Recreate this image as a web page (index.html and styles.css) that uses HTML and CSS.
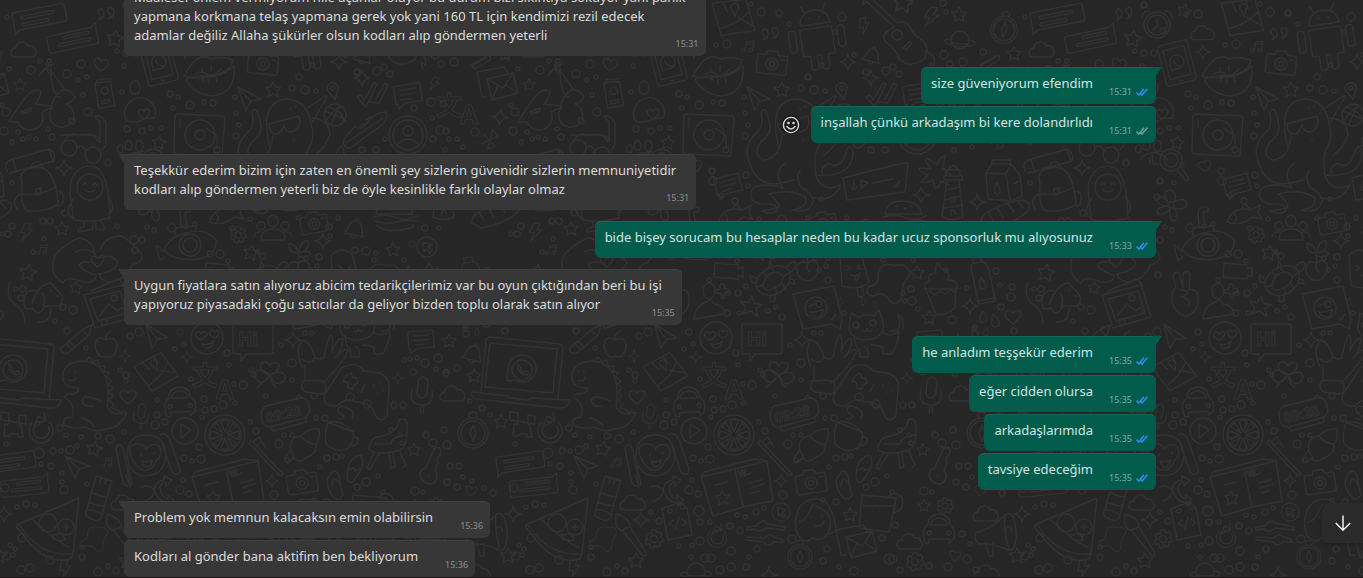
FILE: index.html
```html
<!DOCTYPE html>
<html lang="tr">
<head>
    <meta charset="UTF-8">
    <title>WhatsApp</title>
    <link rel="stylesheet" href="styles.css">
</head>
<body>
    <svg class="wallpaper" aria-hidden="true">
        <defs>
            <pattern id="doodles" width="509" height="600" patternUnits="userSpaceOnUse">
                <g id="tile"></g>
                <use href="#tile" x="-509"/>
                <use href="#tile" x="509"/>
            </pattern>
            <symbol id="ticks" viewBox="0 0 12 8">
                <path d="M0.5 4.5L2.8 7L8 0.8M4.6 5.6L6 7L11.4 0.8" fill="none" stroke="currentColor" stroke-width="1.6"/>
            </symbol>
        </defs>
        <rect width="100%" height="100%" fill="url(#doodles)"/>
    </svg>

    <main class="chat">
        <div class="message in long">
            <p class="text">Maalesef önlem vermiyorum hile açanlar oluyor bu durum bizi sıkıntıya sokuyor yani panik<br>yapmana korkmana telaş yapmana gerek yok yani 160 TL için kendimizi rezil edecek<br>adamlar değiliz Allaha şükürler olsun kodları alıp göndermen yeterli</p>
            <span class="meta">15:31</span>
        </div>

        <div class="message out first">
            <p class="text">size güveniyorum efendim</p>
            <span class="meta">15:31 <svg class="ticks read"><use href="#ticks"/></svg></span>
        </div>
        <div class="row">
            <button class="react" aria-label="İfade bırak">
                <svg viewBox="0 0 18 18" fill="none" stroke="currentColor" stroke-width="1.4">
                    <circle cx="9" cy="9" r="7.6"/>
                    <path d="M5 10.5Q9 15.5 13 10.5" stroke-linecap="round"/>
                    <circle cx="6.5" cy="7" r="0.6" fill="currentColor"/>
                    <circle cx="11.5" cy="7" r="0.6" fill="currentColor"/>
                </svg>
            </button>
            <div class="message out">
                <p class="text">inşallah çünkü arkadaşım bi kere dolandırlıdı</p>
                <span class="meta">15:31 <svg class="ticks"><use href="#ticks"/></svg></span>
            </div>
        </div>

        <div class="message in first long">
            <p class="text">Teşekkür ederim bizim için zaten en önemli şey sizlerin güvenidir sizlerin memnuniyetidir<br>kodları alıp göndermen yeterli biz de öyle kesinlikle farklı olaylar olmaz</p>
            <span class="meta">15:31</span>
        </div>

        <div class="message out first">
            <p class="text">bide bişey sorucam bu hesaplar neden bu kadar ucuz sponsorluk mu alıyosunuz</p>
            <span class="meta">15:33 <svg class="ticks read"><use href="#ticks"/></svg></span>
        </div>

        <div class="message in first long">
            <p class="text">Uygun fiyatlara satın alıyoruz abicim tedarikçilerimiz var bu oyun çıktığından beri bu işi<br>yapıyoruz piyasadaki çoğu satıcılar da geliyor bizden toplu olarak satın alıyor</p>
            <span class="meta">15:35</span>
        </div>

        <div class="message out first">
            <p class="text">he anladım teşşekür ederim</p>
            <span class="meta">15:35 <svg class="ticks read"><use href="#ticks"/></svg></span>
        </div>
        <div class="message out">
            <p class="text">eğer cidden olursa</p>
            <span class="meta">15:35 <svg class="ticks read"><use href="#ticks"/></svg></span>
        </div>
        <div class="message out">
            <p class="text">arkadaşlarımıda</p>
            <span class="meta">15:35 <svg class="ticks read"><use href="#ticks"/></svg></span>
        </div>
        <div class="message out">
            <p class="text">tavsiye edeceğim</p>
            <span class="meta">15:35 <svg class="ticks read"><use href="#ticks"/></svg></span>
        </div>

        <div class="message in first">
            <p class="text">Problem yok memnun kalacaksın emin olabilirsin</p>
            <span class="meta">15:36</span>
        </div>
        <div class="message in">
            <p class="text">Kodları al gönder bana aktifim ben bekliyorum</p>
            <span class="meta">15:36</span>
        </div>
    </main>

    <button class="scroll-down" aria-label="En alta in">
        <svg viewBox="0 0 16 16" fill="none" stroke="currentColor" stroke-width="1.4"><path d="M8 0.5V15M0.8 8L8 15.2L15.2 8"/></svg>
    </button>

    <script src="wallpaper.js"></script>
</body>
</html>
```
FILE: styles.css
```css
* {
    box-sizing: border-box;
}
body {
    margin: 0;
    height: 100vh;
    overflow: hidden;
    background-color: #262626;
    border-bottom: 1px solid #1c1216;
    font-family: "Segoe UI", "Noto Sans", sans-serif;
    font-size: 13px;
    line-height: 19px;
}
.wallpaper {
    position: fixed;
    inset: 0;
    width: 100%;
    height: 100%;
    z-index: -1;
}
#tile {
    fill: none;
    stroke: #323232;
    stroke-width: 1.4px;
    stroke-linecap: round;
    stroke-linejoin: round;
}
#tile text {
    font-weight: bold;
    stroke-width: 1px;
}
.chat {
    display: flex;
    flex-direction: column;
    justify-content: flex-end;
    gap: 2px;
    height: 100%;
    padding: 0 207px 0 124px;
}
.row {
    display: flex;
    align-items: center;
    align-self: flex-end;
    gap: 10px;
}
.message {
    position: relative;
    display: grid;
    grid-template-columns: auto auto;
    flex-shrink: 0;
    padding: 7px 8px 11px 10px;
    border-radius: 6px;
    white-space: nowrap;
}
.text {
    margin: 0;
}
.in {
    align-self: flex-start;
    column-gap: 27px;
    padding-right: 7px;
    background-color: #373737;
    color: #dcdcdc;
    box-shadow: inset 0 1px #404040;
}
.out {
    align-self: flex-end;
    column-gap: 16px;
    background-color: #025c4c;
    color: #d3e5e1;
    box-shadow: inset 0 1px #12695a;
}
.first {
    margin-top: 9px;
}
.first::before {
    content: "";
    position: absolute;
    top: 0;
    width: 10px;
    height: 9px;
}
.in.first {
    border-top-left-radius: 0;
}
.in.first::before {
    left: -6px;
    background-color: #373737;
    clip-path: polygon(0 0, 100% 0, 60% 100%);
}
.out.first {
    border-top-right-radius: 0;
}
.out.first::before {
    right: -6px;
    background-color: #025c4c;
    clip-path: polygon(0 0, 100% 0, 40% 100%);
}
.meta {
    display: flex;
    align-items: center;
    gap: 4px;
    align-self: end;
    margin-bottom: -5px;
    font-size: 9px;
    line-height: 12px;
    color: #8f8f8f;
}
.out .meta {
    color: #7fada4;
}
.long {
    grid-template-columns: auto;
}
.long .text,
.long .meta {
    grid-area: 1 / 1;
}
.long .text {
    padding-right: 13px;
}
.long .meta {
    justify-self: end;
}
.ticks {
    width: 12px;
    height: 8px;
    color: #6da095;
}
.ticks.read {
    color: #2d8be6;
}
button {
    display: flex;
    align-items: center;
    justify-content: center;
    padding: 0;
    border: none;
}
.react {
    width: 20px;
    height: 20px;
    border-radius: 50%;
    background-color: #1d1d1d;
    color: #d8d8d8;
}
.react svg {
    width: 18px;
    height: 18px;
}
.scroll-down {
    position: fixed;
    right: 0;
    bottom: 35px;
    width: 41px;
    height: 40px;
    padding-right: 0;
    border-radius: 6px 0 0 6px;
    background-color: #2a2a2a;
    color: #ffffff;
    box-shadow: 0 1px 4px rgba(0, 0, 0, 0.2);
}
.scroll-down svg {
    width: 16px;
    height: 16px;
}
```
FILE: wallpaper.js
```js
// every shape is drawn round its own centre
const shapes = {
    star: 'M0-8L2.3-3.2L7.6-2.5L3.8 1.2L4.7 6.5L0 4L-4.7 6.5L-3.8 1.2L-7.6-2.5L-2.3-3.2Z',
    sparkle: 'M0-8Q1-1 8 0Q1 1 0 8Q-1 1-8 0Q-1-1 0-8Z',
    heart: 'M0 7C-4 4-8 1-8-3C-8-7-2-8 0-4C2-8 8-7 8-3C8 1 4 4 0 7Z',
    cloud: 'M-9 7C-15 6-14-2-8-2C-8-9 3-10 4-4C11-6 15 4 9 7Z',
    bell: 'M-10 6C-6 3-8-8 0-8C8-8 6 3 10 6ZM-3 7Q0 11 3 7M-2-8Q0-13 2-8',
    bolt: 'M-2-10L5-10L2-3L7-3L-4 10L-1 1L-6 1Z',
    note: 'M-4 5V-6L5-8V3M-4-3L5-5M-4 5a2.5 2 0 1 0-5 1a2.5 2 0 1 0 5-1M5 3a2.5 2 0 1 0-5 1a2.5 2 0 1 0 5-1',
    drop: 'M0-7C5 0 5 6 0 6C-5 6-5 0 0-7Z',
    quote: 'M-2-4a3 3 0 1 0-4 4Q-5 4-8 5Q-1 4-2-4ZM8-4a3 3 0 1 0-4 4Q5 4 2 5Q9 4 8-4Z',
    gear: 'M-2-9H2L3-6L6-7L8-4L6-2L9 0V3L6 3L6 7L3 8L1 6L-1 9L-4 8L-4 5L-8 5L-8 1L-6 0L-8-3L-6-6L-3-5ZM3.5 0a3.5 3.5 0 1 0-7 0a3.5 3.5 0 1 0 7 0',
    camera: 'M-13-8H-7L-5-12H4L6-8H13Q15-8 15-6V9Q15 11 13 11H-13Q-15 11-15 9V-6Q-15-8-13-8ZM6 1a6 6 0 1 0-12 0a6 6 0 1 0 12 0M2.500 1a2.500 2.500 0 1 0-5 0a2.500 2.500 0 1 0 5 0M9-4H12',
    compass: 'M15 0a15 15 0 1 0-30 0a15 15 0 1 0 30 0M12 0a12 12 0 1 0-24 0a12 12 0 1 0 24 0M0-8L3 0L0 8L-3 0ZM-3-15Q-6-20 0-21Q6-20 3-15',
    chat: 'M-24-9H24Q27-9 27-6V7Q27 9 24 9H-21L-27 13L-26 7V-6Q-26-9-24-9ZM-17-4H15Q17-3 15-1H-17Q-19-3-17-4ZM-17 3H8Q10 4 8 6H-17Q-19 4-17 3Z',
    chatSmall: 'M-14-10H14V9H-4L-12 14V9H-14ZM-8-5H9M-8 0H9M-8 5H3',
    lips: 'M-25 2Q-15-16-7-17Q-2-18 2-15Q13-18 24-14Q22-4 10 0Q-8 7-25 2ZM-23 5Q-8 0 3 3Q15 1 25-8Q27 20 3 22Q-16 20-23 5M-14 0Q-7-4-2 0T12-5M-6 3V7M0 5V10M7 3L8 8M-7-6V-1M2-8V-3',
    phone: 'M-14-23H14Q17-23 17-20V20Q17 23 14 23H-14Q-17 23-17 20V-20Q-17-23-14-23ZM-12-17H12V16H-12ZM8-1a8 8 0 1 0-16 0L-8 7L-3 6A8 8 0 0 0 8-1M-3-4Q-3 3 4 4M-2 20H2',
    map: 'M-18-16L16-16L21 16L-13 17ZM-14 10Q2 9 18-3M6 1L19 11M-7-15L-4-6M7-15L8-7M1-7a3.500 3.500 0 1 1 5 0L3 0Z',
    android: 'M-15-14Q-14-28 0-28Q14-28 15-14ZM-9-27L-12-33M9-27L12-33M-5-21V-20M5-21V-20M-16-10H16V17H9V30Q5 34 2 30V17H-2V30Q-6 34-9 30V17H-16ZM-21-9Q-26-12-28-8V10Q-25 14-21 10ZM21-9Q26-12 28-8V10Q25 14 21 10Z',
    guitar: 'M-3-8L-30-33L-35-30L-32-37L-25-36L1-12Q8-16 13-8Q16 0 25 5Q34 14 27 24Q13 34 2 24Q-1 14-10 8Q-17 0-9-4ZM5 0a5 5 0 1 0-10 0a5 5 0 1 0 10 0M6 13L13 6L15 8L9 15ZM28 16Q40 20 37 30Q31 24 35 34',
    planet: 'M9 0a9 9 0 1 0-18 0a9 9 0 1 0 18 0M-9 0Q-18 0-14 4Q0 9 14 4Q18 0 9-1M-9 3Q0 5 9 3',
    clock: 'M13 0a13 13 0 1 0-26 0a13 13 0 1 0 26 0M10 0a10 10 0 1 0-20 0a10 10 0 1 0 20 0M0-6V1L-4 5M-15-8Q-14-14-8-14M15-8Q14-14 8-14',
    clip: 'M-10 3L6-6Q11-7 9-2L-6 7Q-10 6-8 3L5-4',
    pin: 'M-4 2A5.500 5.500 0 1 1 4 2L0 10ZM2-2a2 2 0 1 0-4 0a2 2 0 1 0 4 0',
    plane: 'M-12-10L12 0L2 3L-2 13ZM-12-10L2 3',
    checks: 'M-14 2L-10 0L-7 5L3-12L6-11L-5 12ZM-1 7L8 8L17-10L14-12L5 4',
    ball: 'M11 0a11 11 0 1 0-22 0a11 11 0 1 0 22 0M-10-4Q0 0 10 4M4-10Q0 0-4 10M-7-8Q8-4 9 6M-9 6Q0-9 8-8',
    shoe: 'M-22 8Q-16 1-11-5Q-5 0 1-8Q8-19 20-19Q23-13 16-6L-16 17Q-24 17-22 8ZM-20 12L17-13M-6-5L-2-8M0-11L4-14',
    person: 'M19 0a19 19 0 1 0-38 0a19 19 0 1 0 38 0M15 0a15 15 0 1 0-30 0a15 15 0 1 0 30 0M5-4a5 5 0 1 0-10 0a5 5 0 1 0 10 0M-11 10Q-6 4 0 4T11 10',
    turntable: 'M-22-20L24-18Q26-17 26-15L23 20Q23 23 20 22L-23 20Q-26 19-25 16L-24-18ZM16 1a15 15 0 1 0-30 0a15 15 0 1 0 30 0M6 1a5 5 0 1 0-10 0a5 5 0 1 0 10 0M7-6L18 2L18 14M21 16a3 3 0 1 0-6 0a3 3 0 1 0 6 0M-19-15V-6',
    cap: 'M-14 11Q-19-1-8-10Q3-16 12-7Q18 2 14 8Q4 8 0 11Q-7 13-14 11ZM4 9Q-3 4-2 1Q1-2 4 1Q8-4 10 2Q9 6 4 9',
    egg: 'M0-8C6-8 9 7 0 7C-9 7-6-8 0-8Z',
    passport: 'M-10-12L7-14L12 13L-6 16ZM-10-12L-7-16L8-17M5-4a4 4 0 1 0-8 1a4 4 0 1 0 8-1M-3 8L6 6V9L-2 11Z',
    scooter: 'M-36 28Q-29 16-20 4Q-13-6-4-3Q-5 5-10 10L6 12Q9 2 17-4Q25-6 30 3Q27 8 21 10A12 12 0 1 1 8 13L-3 18A11 11 0 1 1-27 28ZM15 3Q8 3 6-19M8-30Q-1-26-6-18M2-26Q9-21 19-5M1-30Q8-31 6-20Q1-21 1-30M-24 18L-14 14V17L-23 20Z',
    mail: 'M-19-16L8-21L12-15M-19-16L-14 9L-9 9M-9-9L17-15L22 5L-4 12ZM-9-9L7 0L17-15M-4 12L2-3M22 5L10-3',
    bluetooth: 'M-9-5L8 6L0 12V-14L8-7L-9 7',
    glasses: 'M-7 8a8 8 0 1 0-16 0a8 8 0 1 0 16 0M17 15a8 8 0 1 0-16 0a8 8 0 1 0 16 0M-20 1Q-13-9-7-5Q10-7 15-2M18 10L22 5V-17Q19-25 11-24Q13-20 16-19V2M-7 8Q-2 3 2 11M-23-5H9L15 2',
    backpack: 'M-16 2Q-20-8-10-12Q5-17 12-7Q19 4 20 23Q10 31-9 30Q-18 29-16 2ZM-31-10Q-34-18-28-21L11-32Q18-29 16-20L-28-8M-25-21L-21-9M11-31L15-20M-15 13Q2 15 18 6M-2 8V14L3 13V7ZM-17 13Q-27 18-21 28M20 10Q28 11 24 24L20 25M-7-12a6 6 0 1 1 12-2',
    astronaut: 'M-16 31Q-23-4-17-12Q-10-26 5-22Q19-17 20 29Q2 34-16 31ZM13-2a13 13 0 1 0-26 0a13 13 0 1 0 26 0M-7-4Q-5-8-3-4M3-4Q5-8 7-4M-5 1Q0 5 5 1M-16 9Q-27 24-16 30M17 8Q27 18 19 25M-6 32V38L-12 40V43L3 40V33M6 32V40L14 41V37L10 31',
    paw: 'M-14 5Q-16-3-10-2Q-8 1-10 6ZM-7 2Q-7-8-2-6Q2-1-2 3ZM4 2Q3-8 9-6Q14-1 8 5ZM-10 12Q0 2 12 8Q20 12 15 18',
    magnifier: 'M11 0a11 11 0 1 0-22 0a11 11 0 1 0 22 0M7 0a7 7 0 1 0-14 0a7 7 0 1 0 14 0M6 10L15 21Q19 20 16 16L10 7M-11 4L-18 4L-19-7L-9-9M-21 4V-2',
    flower: 'M-3-3Q-10-14-1-15Q7-13 3-3Q14-9 16-1Q14 6 3 3Q10 14 3 16Q-3 14-1 4Q-11 14-14 7Q-14 2-4 1Q-16-1-14-7Q-9-11-3-3ZM3 0a3 3 0 1 0-6 0a3 3 0 1 0 6 0',
    fish: 'M-17 7Q-10-10 7-5L16-10L14-2L18 4L8 2Q-2 12-17 7ZM-10-1Q-6 2-9 8M-2-7L1-11L6-6M-13 4V5',
    submarine: 'M-25 7Q-20-6-3-10Q16-16 27-3Q28 12 9 16Q-15 19-25 7ZM12 2a11 11 0 1 0-22 0a11 11 0 1 0 22 0M8 2a7 7 0 1 0-14 0a7 7 0 1 0 14 0M-14-8V-15L7-17V-12M-8-16L-9-31Q-8-37 0-36Q3-33-1-31H-4L-2-17M-26 8Q-36-4-31 10Q-29 22-24 13',
    people: 'M5-7a5 6 0 1 0-10 0a5 6 0 1 0 10 0M-12 12Q-12 1 0 1T12 12ZM-8-2a4 4 0 1 0-8 0a4 4 0 1 0 8 0M16-2a4 4 0 1 0-8 0a4 4 0 1 0 8 0M-19 9Q-18 3-12 4M19 9Q18 3 12 4',
    turtle: 'M-17 7Q-18-6-2-13Q11-17 17-8Q19 7 4 14Q-10 19-17 7ZM-10 5Q-8-6 2-8Q11-7 10 0Q6 8-4 10Q-10 10-10 5ZM-17 7L-10 5M-2-13L1-8M17-8L10-3M4 14L2 8M-10-8L-6-4M12 8L8 3M14-13Q19-20 23-17Q23-11 17-7M-16-1L-23-5L-22 2L-17 3M-3 16V22L2 21V15M17 3L22 4L21 0L18-1M-4-13L-3-19L0-13',
    video: 'M-13-8L10-6V-2L15-4V6L10 4V8L-14 6ZM-7-3V-3',
    peach: 'M0-2Q-12-6-11 7Q-7 18 3 15Q13 9 10-1Q5-7 0-2Q-3 4 2 7M0-2L-1-12Q-11-12-10-22Q-2-20-1-12Q3-26 9-24Q11-13-1-12M-1-12Q9-16 12-11Q6-6 0-9',
    peace: 'M-9-7L-12-19Q-8-25-5-19L-2-6V-21Q3-25 5-20L4-4Q12-6 13 3Q14 19 1 22Q-9 21-13 8Q-14-3-9-7ZM-5-4Q4-4 2 0Q-2 4-5 2M-2 3Q5 6 4 11',
    bust: 'M6-13a6 8 0 1 0-12 0a6 8 0 1 0 12 0M-15 15Q-14 3-5-1L2-4L5 0Q15 1 16 10Z',
    plus: 'M0-7Q4-7 2-2Q8-4 7 1L2 2Q4 9 0 7L-1 2Q-8 3-7-1L-2-2Q-3-7 0-7Z',
    starfish: 'M0-10L3-3L11-2L5 2L8 10L0 5L-8 9L-5 2L-11-4L-3-3Z',
    faceChat: 'M-24-14L17-22L25 11L23 21L14 16L-14 21ZM10 0a11 11 0 1 0-22 0a11 11 0 1 0 22 0M-8-2L-3-4M5-4a3 3 0 1 0-6 0a3 3 0 1 0 6 0M-7 4Q0 5 6 1Q6 9 0 9Q-5 9-7 4M13 10L15 12L19 6',
    photos: 'M-25-8L14-18L24 14L-14 25ZM-19-4L11-12L18 10L-11 18ZM-19-12L10-24L16-17M-10 13L0 1L9 8L13 4L17 10M8-5a3 3 0 1 0-6 0a3 3 0 1 0 6 0',
    popsicle: 'M-15-17Q-7-28 6-19L14 9Q5 18-13 13ZM2 14L3 23Q7 25 9 21L7 13M-8-7L-4-5L-8-3M5-8L2-5L6-4M-4 2Q1 4 5 0M0 3V7Q4 8 4 2',
    hands: 'M-1 6Q-14 1-18 7Q-13 14-1 17Q-2 26-14 24Q-31 17-34 25Q-49 16-42-3Q-31-15-18-20Q-4-18-2-3Q-8-12-22-6M3-8Q8-22 25-22Q43-9 45-2Q45 5 35 7Q31 21 13 24Q4 23 2 16Q17 14 21 5Q16-5 2 0M0 9Q-8 1-5-1Q-2-3 0 0Q5-5 7 0Q6 6 0 9',
    dog: 'M-10 7Q-4-13 9-14Q12-10 17-5Q24 2 17 9L3 9Q-4 22-9 11Q-19 15-18 4Q-17-9-5-6M0-4Q5 4 1 9M9-7V-6M14-1H17M-32-15Q-37 0-27 7Q-17 14-17 27M9 11Q9 26-4 25',
    burger: 'M-19-2Q-17-15-2-15Q16-14 18-2ZM-21 1Q-8-3 2 2Q12 5 22 0M-20 5Q-8 9 2 6T21 5M-19 9Q-11 16 2 14Q20 13 18 9M-8-9L-6-10M0-7L2-8M6-10H8',
    cursor: 'M10 0a10 10 0 1 0-20 0a10 10 0 1 0 20 0M-4-5L5-2L1 0L5 4L3 6L-1 2L-3 5Z',
    lighthouse: 'M-7-18H7V-12H-7ZM-9-12H9V-8H-9ZM-6-8L-11 29Q0 34 10 29L6-8M-7 2L7-1M-8 12L8 8M-9 20L9 17M-5-18Q0-27 5-18M-2 14V9Q2 8 2 13ZM-2 27V22Q2 21 2 26',
    voice: 'M-32-6L24-20L33-21L30 8L-28 16ZM-21-3V4M-24 2Q-22 10-18 2M-14-4V4L-7-1ZM-2-1L18-5M19 1L21 3L25-3',
    hand: 'M16 2L8-5L10-17Q5-17 2-8L-8-15Q-11-12-4-4L-16-5Q-16-1-7 2L-14 9Q-10 11-2 7L0 15Q4 16 6 8L14 12',
    milk: 'M-17-9L-11-18H8L17-7L19 14L7 19L-15 17ZM-17-9L3-8L8-18M3-8L7 19M-11-18V-22H7V-18M11 2L16-1M-6 1C-1 9-3 12-6 12C-10 12-9 6-6 1Z',
    bread: 'M-24 13Q-25 4-11-1Q3-9 17-10Q29-7 22 2Q8 14-15 18ZM-17 2L-12 10M-8-2L-2 7M3-6L9 2M13-9L18-2',
    blob: 'M-20 4Q-10 3-12-7Q-10-19 4-15Q14-18 17-8Q15-3 11 2Q10 9 9 16Q3 24-4 13Q-9 9-17 13Q-25 10-20 4Z',
    cupcake: 'M-15-1Q-17-8-10-9Q-14-16-4-17Q-6-22-2-27Q1-20 6-20Q11-15 7-10Q18-11 17-1ZM-14 0L-4 24Q4 27 15 18L16-2M-10 1L-5 5L0 1L5 4L10 0L15 2',
    bottle: 'M-8-12Q-9-20-5-21L-5-26H3L4-21Q9-18 9-12L10 20H-7ZM-5-21H4M0-6C5 2 3 6 0 6C-3 6-4 1 0-6ZM-7 17H10',
    cat: 'M-17-6L-16-15L-8-11Q0-15 7-12L12-18L15-9Q20 3 9 10Q-6 15-15 7Q-20 1-17-6ZM-8-3a3 3 0 1 0-6 0a3 3 0 1 0 6 0M9-5a3 3 0 1 0-6 0a3 3 0 1 0 6 0M-4 3Q-1 5 0 1Q2 5 5 2M-13 8Q-12 19-8 21L-7 29H1Q3 22-3 18M4 17Q11 17 16 19L16 26H25Q32 12 32 3Q24 10 15 4M23 3Q37 4 31-13Q37-12 36 1',
    pencil: 'M-17 10L6-10L15-14L12-4L-9 14Q-15 16-17 10ZM-11 5L-5 11M6-10Q8-4 12-4M-8 2L-2 8',
    apple: 'M0-6Q-11-12-11 1Q-7 14 0 10Q8 14 11 1Q11-11 0-6ZM0-6Q-2-11 5-15',
    love: 'M16 0a16 16 0 1 0-32 0a16 16 0 1 0 32 0M-6 2Q-13-1-11-5Q-8-8-6-4Q-3-8 0-5Q0-1-6 2ZM7 0Q1-3 3-7Q6-9 7-6Q10-9 12-6Q13-3 7 0ZM-5 6Q2 8 6 3Q6 10 0 10Q-3 10-5 6',
    hi: 'M-18-16H18Q20-16 20-14V12Q20 14 18 14H-7L-12 21V14H-18Q-20 14-20 12V-14Q-20-16-18-16Z',
    laptop: 'M-34-31Q-33-35-30-35L40-28Q43-27 43-24L38 27M-34-31L-39 20M-30-29L37-23L33 21L-35 15ZM-49 20Q-49 26-44 27L40 36Q49 36 50 28L11 26L9 28L-11 26L-12 24ZM16-2a14 14 0 1 0-28-2L-13 9L-5 8A14 14 0 0 0 16-2M12-2a10 10 0 1 0-20 0a10 10 0 1 0 20 0M-2-8Q-3 2 7 3Q10 1 6-1L4 0Q0-1 1-4Z',
    dino: 'M-2-35Q-25-34-23-17Q-22-8-7-8Q-7-3-14-2Q-22-3-21 2Q-10 8-14 21Q-24 21-22 29Q-12 34 0 31Q7 37 20 33Q35 32 41 16Q26 22 21 10Q27-32-2-35ZM-17-25V-24M-11-25V-24M-17-16Q-10-14-10-19M15 5Q-3-3-4 5Q-1 12 7 10M-5 22Q4 24 8 30M0-35L3-39L7-34L12-36L13-30L19-30L18-25L23-23L21-19L26-15L22-12L27-8L23-4L27 0L23 4L28 8L25 12L32 14L34 17L38 14',
    clover: 'M0 0Q-12-4-9-12Q-3-15 0-9Q4-15 9-11Q11-5 0 0ZM0 0Q13-6 15 1Q15 8 9 8Q6 11 0 0ZM0 0Q-10-8-15-3Q-17 3-12 6Q-8 11 0 0ZM0 0L-12 12M0 0Q2 10 6 12',
    ok: 'M-16 4Q-24-16-15-23Q-7-20-3-6Q-7 3-16-4M-3-6Q2-2 6-6Q9-22 12-28Q16-29 14-11Q19-26 25-24Q24-12 17-5Q28-17 30-12Q23 2 9 16L4 20M-13 2L-13 18M-15 18Q2 16 7 19Q10 29 4 31L-12 29Q-18 27-15 18',
    pad: 'M-17-23Q-3-31 5-20L20-18Q32-13 30-2L28 25Q19 35 14 18Q7 10-3 11Q-12 5-22 15Q-38 16-34 3ZM-13-15L-8-18L-6-13L-2-13L-1-8L-5-6L-6-2L-11-3L-11-8L-16-10ZM-5 6a4 4 0 1 0-8 0a4 4 0 1 0 8 0M12 13a4 4 0 1 0-8 0a4 4 0 1 0 8 0M2 1L6-7M15-6V-5M21-9V-8M18 2V2M24-1V0',
    mic: 'M-5-12Q0-20 5-12V1Q0 9-5 1ZM-10-3Q-13 12 0 12T10-3M0 12V20M3 12V20',
    car: 'M-15 9Q-17-3-11-5Q-11-15 0-16Q11-15 11-5Q17-2 15 9L10 13V9H-10V13H-14ZM-9-5Q-7-12 0-12T9-5ZM-8 3a2 2 0 1 0-4 0a2 2 0 1 0 4 0M12 3a2 2 0 1 0-4 0a2 2 0 1 0 4 0',
    digital: 'M-19-9L16-17Q23-17 24-9Q27-1 19 3L-15 12Q-23 12-24 1Q-24-7-19-9ZM-14 13L-12 16L21 7V3M11-17L14-20L17-17',
    lemon: 'M20 0a20 20 0 1 0-40 0a20 20 0 1 0 40 0M16 0a16 16 0 1 0-32 0a16 16 0 1 0 32 0M0-3L-4-13Q0-17 4-13ZM0 3L-4 13Q0 17 4 13ZM-3 0L-13-4Q-17 0-13 4ZM3 0L13-4Q17 0 13 4ZM-2-2L-12-8L-8-12ZM2 2L12 8L8 12ZM2-2L12-8L8-12ZM-2 2L-12 8L-8 12Z',
    play: 'M13 0a13 13 0 1 0-26 0a13 13 0 1 0 26 0M-4-7V7L6-1Z',
    cup: 'M-12-12L13-2Q15 3 10 13Q-1 21-13 11Q-17 5-12-12ZM-12-12Q2-15 13-2M13 3Q21 3 17 9Q13 14 9 10M-3-16Q2-13 4-18Q-7-25 2-28Q17-24 12-16',
    croissant: 'M-18 10Q-13 2-12 3Q-15-11-2-12Q5-20 16-19Q17-9 13-4Q15 5 3 10Q-4 16-10 10Q-15 17-18 14ZM-12 3L-8 10M-2-12Q4-4 13-4',
    chair: 'M-18 8Q-18-5-5-6Q11-10 12-22Q21-26 20-13Q21 8 9 9Q-9 14-18 8ZM-12 2H4Q5-6 20-7M-13 11L-20 26L-17 27L-7 11M2 11L4 26L8 25L6 10M12 8L19 23L16 25',
    brushTooth: 'M-16-17L16 17Q13 20 11 17L-18-14ZM-13-16L-8-20L-2-10M-10-12L-5-15',
    monkey: 'M20-1Q18-20 0-20Q-18-20-19 0Q-17 21 0 21Q19 20 20-1ZM-14 3Q-20-9-10-11Q-2-12 0-6Q6-13 13-9Q18 0 10 6Q6 17-4 15Q-11 10-14 3ZM-5-1V1M8-3V-1M-4 6Q2 8 6 5Q6 11 1 12Q-3 11-4 6M-20 20Q-14 38-16 30L-22-4Q-26-15-30-7Q-26 15-23 28Q-18 34-14 29L-18 11M14-20Q20-24 24-15L34 14Q33 23 26 17L16-12',
    reload: 'M-9-8A12 12 0 1 0 8-9M-7-4A8 8 0 1 0 7-5M-7-4L-3-15L5-11ZM3-18L5-10L-3-9',
    creeper: 'M-12-12L-4-11V-3L-12-4ZM6-9L13-8V0L6-1ZM-4-3L6-1L8 2L10 13H5V10H-3V12H-9L-8 0L-4 0Z',
    sock: 'M-3-24L13-19Q7-2 4 12Q2 24-7 19Q-16 17-12 9ZM-8-8Q2-3 9-3M-10 2Q0 7 6 5M-12 10Q-4 9 3 15M2-22L1-17M7-21L6-16',
    pizza: 'M-35 0L25-26L19 30Q-15 33-35 0ZM-35 0Q-40 2-33 8Q-10 42 17 35L19 30M-22-5Q1 17 15 23M3-1a9 9 0 1 0-18 0a9 9 0 1 0 18 0M20 3a8 8 0 1 0-16 0a8 8 0 1 0 16 0M0 15Q-5 9 2 11Q6 7 10 13Q14 19 0 15M9 3H15M12 0V6',
    shuffle: 'M-16-4Q-5-8 0 5Q6 13 12 11V15L17 9L11 4V8Q4 7 3-4Q6-10 9-9V-5L15-11L7-15V-11Q-3-10-3 2Q-6 9-13 10',
    notebook: 'M-33-4L1-12L33-20L39 20L9 26L-21 35ZM1-12L9 26M-33-4L-30-9L20-22L33-20M-19 4L-7 1M10-5L17-8M15 2L28-1M17 7L30 3M18 12L26 10M-12 10L-10 14L-5 14L-8 19L-6 23L-11 21L-15 24L-15 18L-18 15L-14 14Z',
    flipflops: 'M-14-5Q-22 3-13 16Q-7 24-2 16Q-5 6-6-3Q-10-12-14-5ZM-13 7Q-12-2-10 0Q-5 3-4 8M12-23Q2-18 2-3Q4 8 10 0Q18-11 18-18Q17-26 12-23ZM4-9Q11-13 10-8Q16-12 16-8',
    key: 'M-7-3L3-24Q8-26 9-21L8-17L5-14L6-9L3-2Q8 8 0 12Q-10 12-12 4Q-12-3-7-3ZM-3 4V5',
    brush: 'M-15-26Q-17-11-9-10L12 16Q16 17 14 11L-1-13Q0-21-15-26ZM-9-10L-1-13',
    code: 'M-15-13L3-20L10-14L15 13L-9 18ZM3-20L4-13L10-14M-4-2L-8 2L-3 5M5-3L9 0L6 4M2-5L-1 7',
    cutlery: 'M-19-6L-10-7Q-4-15 0-10L19-6V-3L0-5Q-7 1-11-4L-19-3ZM-19 4L-1 5Q4-1 8 4L16 6L17 9L8 9Q2 15-2 9L-19 7',
    woman: 'M-17 19Q-24 6-17-10Q-7-23 8-17Q18-9 20 12Q15 17 9 16M-17 19Q-9 26-4 20Q11 25 14 9Q16-3 6-9Q-2-12-3-14Q-10 4-17 4M-5-1V0M6-2V-1M-1 8Q6 9 8 3',
    drink: 'M-18-13L16-10L9 24L-21 20ZM-17-2H13M8-10Q14-19 22-10Q25 1 14 5M15-8V3M-7 4V4M0 3V3',
    megaphone: 'M-18 10Q-24 5-21-1Q-4-6 8-19Q12-23 16-17Q22 1 17 13Q15 18 9 15Q-5 9-18 10ZM8-19Q6-2 12 14M-11 10L-8 22L-4 22V9M14-2a3 4 0 1 0-5 1',
    tentacles: 'M-37 21Q-45 3-30-11Q-23-16-26-30Q-22-40-18-22Q-14-10-26-1Q-35 11-24 17Q-7 16-5-7M-30-11M-37 21Q-29 45-5 40L7 37M-1 20Q-15 28-4 45Q-23 39-34 45Q-41 57-27 61Q-12 60-10 65L-25 68Q-11 75-8 62Q-14 53-18 51Q6 45 19 55Q20 65 5 67Q25 71 26 57Q24 49 15 45Q8 37 13 27M28 30Q34 51 54 42Q45 60 27 55M29 32Q65 35 66 10Q63-4 57 14Q52 27 41 20Q32 27 36 30M34-25Q50-24 52-9Q48 5 37 12M26-33L46-46Q52-50 46-41L34-20',
    octopus: 'M-8 5Q-20-42 9-44Q31-42 33-18Q38-8 31 5Q26 12 29 31M-9-19L21-27Q24-14 14-11Q7-11 6-18Q2-7-4-9Q-9-12-9-19ZM13-35V-34M18-37V-36M24-30V-29M16-3V-4'
};

// name, x, y, rotation, scale
const doodles = [
    ['map', 223, 17, -7], ['android', 308, 38, -8], ['quote', 261, 34, -8], ['note', 240, 47, 10, 0.8], ['camera', 263, 63, 6],
    ['bell', 363, 56, 15, 0.9], ['guitar', 388, 35], ['star', 394, 3, 10, 1.3], ['bolt', 422, 17, 10], ['bolt', 355, 26, -15, 0.8],
    ['star', 450, 15], ['planet', 451, 40, 5], ['compass', 495, 30, 8, 0.9], ['chat', 39, 17, -11], ['chat', 73, 40, 168, 0.95],
    ['cloud', 24, 50], ['quote', 106, 14, -8], ['clock', 139, 25], ['star', 115, 39, 8, 1.1], ['star', 166, 11, 15, 0.9],
    ['cloud', 185, 33, 0, 0.95], ['phone', 159, 63, -14, 0.9], ['sparkle', 185, 52, 0, 0.9], ['lips', 209, 74], ['star', 505, 54, 0, 0.9],
    ['clip', 481, 62], ['sparkle', 339, 62], ['sparkle', 362, 78], ['star', 273, 90], ['plane', 249, 98, 5], ['pin', 333, 90, -12],
    ['checks', 371, 95], ['chatSmall', 408, 94, -9, 0.95], ['bolt', 434, 84, 15, 0.7], ['ball', 335, 115], ['shoe', 366, 131],
    ['person', 408, 135], ['turntable', 199, 134], ['cap', 140, 110], ['egg', 135, 88, 0, 0.9], ['passport', 104, 94, 0, 0.9],
    ['heart', 101, 65, 10, 0.9], ['scooter', 45, 94], ['mail', 496, 88], ['star', 20, 85, 0, 0.8], ['bluetooth', 490, 140, 14, 0.8],
    ['sparkle', 500, 117, 5], ['glasses', 84, 140], ['backpack', 38, 181], ['astronaut', 90, 189], ['paw', 132, 147],
    ['sparkle', 64, 168], ['star', 159, 143, 8, 0.9], ['magnifier', 153, 160], ['heart', 187, 166, -15, 0.8], ['chatSmall', 219, 185, -14, 0.9],
    ['flower', 153, 205], ['fish', 226, 215], ['submarine', 189, 243], ['gear', 238, 235, 0, 0.9], ['people', 273, 228],
    ['camera', 314, 223, -10, 0.9], ['sparkle', 323, 241], ['star', 251, 253, 10], ['turtle', 264, 280], ['video', 219, 271],
    ['peach', 299, 265], ['peace', 167, 294], ['bust', 200, 304], ['plus', 213, 291], ['starfish', 242, 306, 5],
    ['faceChat', 308, 308], ['photos', 109, 303], ['popsicle', 346, 273], ['hands', 97, 258], ['dog', 42, 297], ['star', 28, 273, 8, 1.1],
    ['bolt', 26, 232, 5, 0.9], ['star', 62, 229, 0, 0.9], ['note', 43, 250, 10, 0.7], ['star', 76, 288, 5, 0.8], ['bell', 355, 229, 12],
    ['cursor', 427, 247], ['star', 393, 250, -5, 0.9], ['lighthouse', 444, 188], ['voice', 366, 184], ['hand', 426, 173],
    ['milk', 494, 182], ['sparkle', 412, 195], ['sparkle', 468, 202], ['bread', 496, 210], ['burger', 395, 216],
    ['octopus', 278, 143], ['tentacles', 278, 143], ['cat', 358, 328], ['blob', 382, 282, 0, 1.1], ['cupcake', 431, 290], ['star', 408, 273, 0, 0.9],
    ['star', 420, 318, 0, 0.9], ['bottle', 473, 283, -10], ['sparkle', 461, 306], ['drop', 331, 302, 12, 0.6], ['drop', 354, 301, -15, 0.6],
    ['drop', 366, 304, -15, 0.5], ['drop', 474, 317, 0, 0.9], ['drop', 486, 321, -15], ['drop', 477, 332, 10, 0.6], ['heart', 504, 317],
    ['pencil', 77, 339], ['apple', 106, 346], ['plane', 156, 336, 10], ['love', 207, 338], ['hi', 253, 340], ['sparkle', 293, 340],
    ['chatSmall', 421, 340, -4, 0.9], ['star', 449, 341, 0, 0.9], ['laptop', 11, 372], ['dino', 86, 396], ['map', 155, 372, -28, 0.9],
    ['sparkle', 125, 356, 0, 0.7], ['sparkle', 187, 357, 0, 0.7], ['clover', 270, 375], ['ok', 318, 363], ['pad', 359, 391],
    ['sparkle', 398, 378, 0, 0.7], ['mic', 422, 393, 5], ['car', 180, 403, -3], ['heart', 128, 397], ['mic', 141, 415, 8, 0.7],
    ['digital', 285, 415], ['lemon', 225, 435], ['play', 185, 431], ['cup', 340, 434], ['croissant', 303, 448], ['chair', 387, 442],
    ['brushTooth', 267, 457], ['monkey', 146, 455], ['reload', 41, 431], ['creeper', 13, 424], ['chat', 11, 462, -8, 0.9],
    ['chat', 25, 487, 174, 0.9], ['star', 94, 449, 10], ['plane', 77, 466], ['note', 108, 463, 8, 0.7], ['sock', 99, 500], ['pizza', 54, 524],
    ['shuffle', 157, 491], ['notebook', 225, 481], ['sparkle', 272, 481, 0, 0.8], ['camera', 302, 482, -8], ['flipflops', 345, 479],
    ['key', 432, 472], ['star', 414, 450, 0, 0.8], ['cloud', 453, 394], ['star', 474, 376, 0, 0.9], ['bell', 473, 354, 14],
    ['compass', 473, 433], ['star', 501, 422, 0, 0.9], ['heart', 471, 491, 10, 0.7], ['cloud', 124, 503], ['brush', 122, 540],
    ['blob', 96, 538, 0, 0.7], ['gear', 145, 539], ['code', 168, 522], ['reload', 208, 538, 5, 0.8], ['cutlery', 257, 533],
    ['cursor', 272, 512, 0, 0.9], ['woman', 307, 518], ['star', 341, 515, 0, 0.9], ['drink', 371, 508], ['mail', 346, 546],
    ['compass', 291, 557, 0, 0.8], ['planet', 187, 572], ['bolt', 65, 569, -10, 0.9], ['star', 127, 561], ['sparkle', 132, 520],
    ['star', 508, 556], ['megaphone', 488, 534], ['car', 430, 530], ['gear', 436, 506, 0, 0.9], ['star', 415, 506, 0, 0.8],
    ['cloud', 477, 514], ['cloud', 401, 542], ['gear', 406, 562], ['heart', 446, 556, 10, 0.7], ['sparkle', 4, 514],
    ['cloud', 478, 573], ['sparkle', 260, 575]
];

// x, y, radius
const dots = [
    [9, 69, 2], [31, 70, 4], [67, 74, 4], [81, 64, 4], [40, 61, 2], [124, 66, 2], [78, 80, 2], [87, 77, 2], [122, 92, 2], [83, 95, 2],
    [88, 112, 4], [72, 121, 3], [4, 131, 4], [48, 129, 2], [12, 142, 2], [23, 139, 2], [36, 139, 2], [52, 137, 3], [108, 163, 3],
    [12, 183, 2], [170, 94, 3], [178, 97, 2], [190, 105, 4], [204, 102, 2], [213, 103, 3], [173, 108, 2], [142, 131, 3], [127, 129, 3],
    [151, 128, 2], [161, 128, 2], [235, 97, 2], [236, 113, 2], [239, 125, 2], [236, 136, 3], [292, 88, 3], [305, 90, 4], [316, 91, 2],
    [299, 77, 3], [313, 65, 2], [326, 32, 2], [333, 17, 4], [345, 55, 2], [280, 24, 2], [270, 13, 3], [252, 12, 4], [242, 4, 2],
    [218, 44, 4], [207, 45, 2], [434, 3, 3], [437, 12, 2], [435, 55, 4], [454, 62, 4], [441, 64, 3], [474, 52, 3], [485, 36, 2],
    [384, 67, 3], [377, 71, 4], [357, 72, 3], [7, 17, 2], [49, 61, 2], [126, 53, 3], [136, 53, 3], [117, 51, 2], [145, 31, 3], [180, 14, 4],
    [169, 14, 2], [126, 5, 3], [431, 102, 4], [443, 104, 3], [440, 130, 4], [433, 139, 3], [414, 108, 3], [432, 118, 2], [390, 74, 3],
    [385, 139, 2], [376, 150, 3], [362, 150, 3], [475, 132, 4], [463, 147, 2], [457, 139, 2], [449, 139, 2], [445, 150, 2],
    [446, 131, 3], [6, 112, 4], [2, 105, 2], [18, 132, 2], [29, 137, 2], [142, 181, 3], [139, 197, 3], [156, 183, 2], [164, 165, 2],
    [203, 171, 3], [204, 181, 4], [212, 195, 2], [226, 201, 3], [237, 175, 3], [239, 186, 2], [172, 228, 4], [186, 226, 2], [195, 224, 2],
    [232, 228, 2], [250, 219, 2], [299, 218, 2], [312, 199, 2], [338, 218, 2], [329, 227, 3], [330, 236, 2], [210, 254, 3], [220, 254, 4],
    [228, 261, 2], [258, 252, 2], [263, 256, 3], [306, 258, 2], [319, 257, 3], [355, 250, 3], [366, 251, 4], [376, 253, 2], [374, 260, 2],
    [404, 260, 2], [425, 228, 3], [439, 228, 2], [412, 244, 3], [142, 240, 3], [147, 227, 2], [134, 240, 4], [135, 250, 3], [154, 230, 2],
    [8, 234, 3], [2, 234, 2], [12, 226, 3], [43, 221, 3], [50, 221, 3], [65, 213, 3], [44, 239, 2], [33, 252, 2], [23, 289, 3], [16, 289, 2],
    [21, 298, 3], [63, 307, 3], [73, 310, 4], [55, 321, 2], [104, 322, 3], [117, 226, 2], [140, 275, 3], [200, 280, 2], [229, 293, 3],
    [219, 293, 2], [237, 286, 2], [218, 313, 3], [230, 313, 2], [267, 307, 2], [273, 317, 3], [259, 311, 2], [319, 280, 3], [310, 270, 2],
    [317, 266, 2], [335, 313, 2], [402, 289, 3], [403, 301, 4], [394, 293, 2], [396, 301, 2], [409, 309, 2], [443, 320, 4], [437, 270, 2],
    [458, 288, 2], [491, 285, 2], [503, 287, 3], [502, 297, 4], [492, 307, 3], [505, 331, 3], [487, 271, 3], [466, 327, 2],
    [130, 336, 3], [139, 332, 4], [180, 332, 3], [184, 344, 2], [175, 349, 2], [86, 348, 2], [67, 331, 3], [227, 353, 3], [229, 365, 2],
    [281, 345, 2], [305, 333, 2], [312, 333, 2], [292, 363, 4], [120, 370, 2], [126, 375, 3], [126, 381, 2], [191, 379, 2], [204, 399, 3],
    [205, 410, 3], [214, 409, 3], [223, 405, 4], [235, 403, 2], [234, 384, 2], [243, 385, 4], [251, 370, 2], [254, 375, 2], [266, 396, 2],
    [292, 380, 2], [314, 396, 3], [157, 400, 2], [155, 425, 4], [165, 422, 3], [157, 415, 3], [202, 417, 2], [256, 431, 3], [250, 422, 2],
    [316, 418, 2], [325, 418, 3], [279, 444, 4], [284, 435, 2], [292, 435, 2], [199, 447, 3], [184, 458, 3], [201, 459, 4], [192, 461, 2],
    [124, 432, 2], [110, 439, 4], [60, 428, 3], [66, 435, 2], [81, 437, 2], [98, 436, 3], [6, 444, 2], [39, 453, 5], [53, 451, 3],
    [61, 451, 2], [70, 450, 4], [77, 446, 2], [41, 464, 2], [51, 466, 3], [62, 473, 2], [64, 490, 4], [62, 482, 2], [87, 484, 2],
    [26, 504, 3], [17, 507, 2], [35, 505, 2], [180, 490, 4], [189, 494, 3], [183, 480, 2], [274, 495, 4], [287, 460, 2], [320, 467, 2],
    [327, 458, 3], [336, 457, 3], [342, 456, 2], [314, 500, 2], [327, 502, 3], [357, 487, 3], [366, 482, 4], [378, 476, 2], [383, 492, 2],
    [402, 443, 2], [404, 360, 2], [410, 359, 2], [417, 358, 2], [425, 363, 4], [413, 372, 3], [438, 358, 4], [436, 369, 2], [446, 371, 2],
    [457, 368, 3], [466, 334, 3], [465, 329, 2], [446, 373, 3], [470, 401, 2], [482, 408, 3], [490, 415, 2], [444, 430, 3], [426, 435, 3],
    [433, 443, 4], [447, 445, 4], [400, 435, 2], [415, 491, 4], [423, 492, 2], [450, 466, 3], [459, 466, 3], [463, 477, 2], [457, 487, 3],
    [447, 482, 3], [472, 481, 2], [484, 488, 2], [493, 493, 3], [5, 488, 4], [394, 405, 3], [403, 405, 3], [391, 430, 2], [142, 512, 2],
    [150, 521, 3], [161, 511, 2], [190, 511, 5], [191, 522, 3], [201, 522, 2], [221, 526, 3], [231, 531, 3], [228, 515, 2],
    [236, 517, 2], [247, 512, 3], [255, 508, 2], [191, 541, 4], [170, 546, 2], [183, 545, 2], [182, 557, 2], [202, 558, 4],
    [222, 551, 4], [248, 549, 3], [240, 557, 2], [237, 567, 3], [222, 567, 4], [211, 570, 4], [196, 558, 4], [82, 547, 2], [82, 557, 3],
    [22, 538, 4], [10, 545, 2], [15, 549, 2], [7, 556, 4], [21, 570, 4], [30, 568, 4], [13, 555, 2], [50, 560, 4], [98, 572, 4],
    [108, 566, 2], [116, 571, 3], [283, 539, 4], [318, 549, 3], [314, 561, 3], [330, 567, 2], [345, 571, 4], [380, 559, 5], [373, 538, 3],
    [384, 559, 4], [391, 570, 3], [453, 534, 3], [461, 544, 2], [458, 559, 4], [467, 570, 3], [439, 567, 4], [420, 566, 3], [386, 525, 3]
];

const NS = 'http://www.w3.org/2000/svg';
const tile = document.getElementById('tile');

function add(tag, attrs, text) {
    const el = document.createElementNS(NS, tag);
    for (const key in attrs) el.setAttribute(key, attrs[key]);
    if (text) el.textContent = text;
    tile.appendChild(el);
}

for (const [name, x, y, rot = 0, scale = 1] of doodles) {
    add('path', { d: shapes[name], transform: `translate(${x} ${y}) rotate(${rot}) scale(${scale})` });
}
for (const [cx, cy, r] of dots) {
    add('circle', { cx, cy, r });
}

// lettering inside the doodles
add('text', { x: 238, y: 346, 'font-size': 19 }, 'Hi');
add('text', { x: 192, y: 385, 'font-size': 26, 'font-family': 'Noto Sans CJK JP' }, '文');
add('text', { x: 216, y: 399, 'font-size': 26 }, 'A');
add('text', { x: 436, y: 115, 'font-size': 26, 'font-family': 'Noto Sans CJK JP' }, '文');
add('text', { x: 460, y: 124, 'font-size': 26 }, 'A');
add('text', { transform: 'translate(267 423) rotate(-13)', 'font-size': 14 }, '09:28');
add('text', { transform: 'translate(230 477) rotate(-14)', 'font-size': 9 }, 'W');
```
